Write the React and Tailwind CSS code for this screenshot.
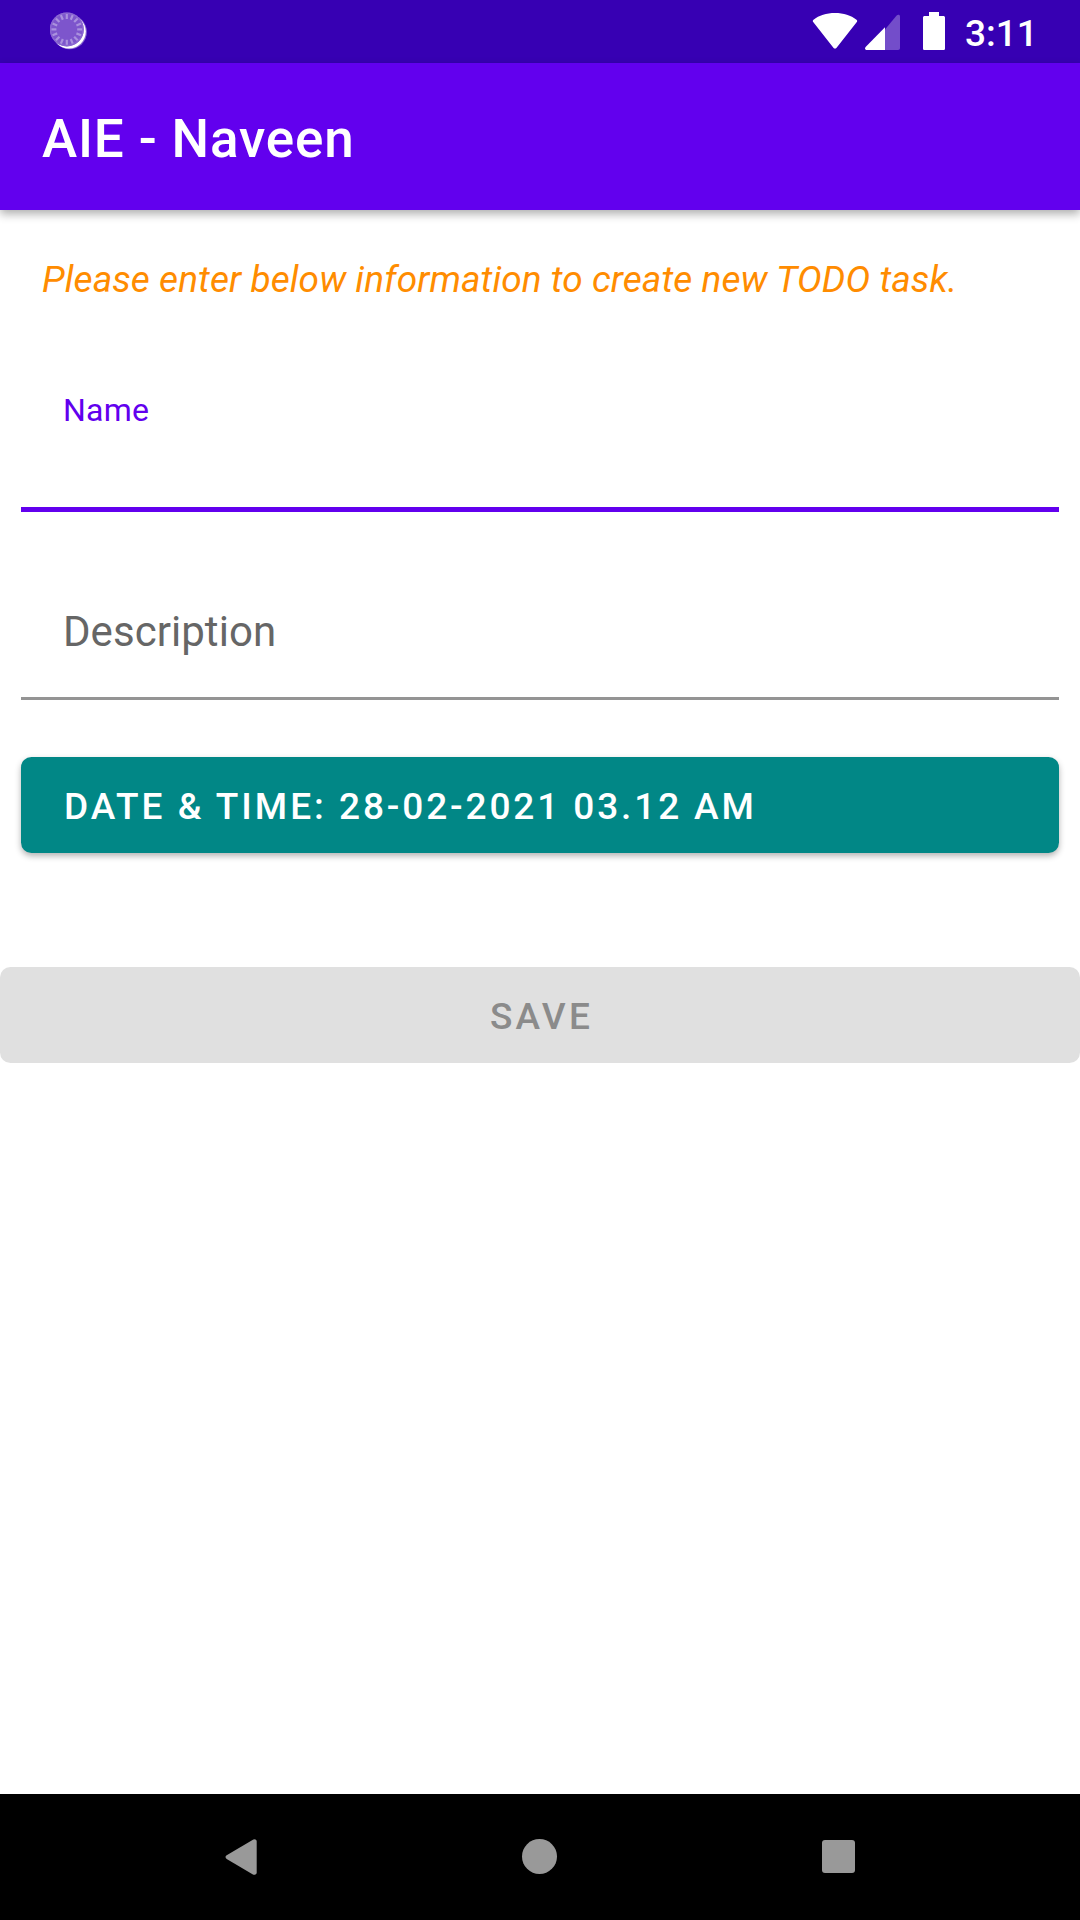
const TICKS = Array.from({ length: 16 }, (_, i) => i * 22.5);

function SyncIcon() {
  return (
    <svg className="h-[38px] w-[38px]" viewBox="0 0 38 38">
      <circle cx="19.6" cy="20" r="17.3" fill="#fff" fillOpacity="0.4" />
      <circle cx="18.9" cy="19.6" r="16.9" fill="#fff" />
      <circle cx="16.8" cy="17.4" r="17" fill="#7d55cc" />
      <circle cx="16.8" cy="17.4" r="16.2" fill="none" stroke="#8a66d1" strokeWidth="1.4" />
      {TICKS.map((a) => (
        <path key={a} d="M16.8 2v5" stroke="#aa91de" strokeWidth="2.2" transform={`rotate(${a} 16.8 17.4)`} />
      ))}
    </svg>
  );
}

function StatusBar() {
  return (
    <header className="flex h-[63px] items-start bg-[#3700b3] text-white">
      <div className="ml-[50px] mt-3">
        <SyncIcon />
      </div>
      <div className="ml-auto mr-[45px] flex items-start">
        <svg className="mt-3 h-[38px] w-[46px]" viewBox="0 0 46 38">
          <path d="M1.5 7.8C7 3.2 14.5 1 23 1s16 2.2 21.500 6.800c.8.7.9 1.500.3 2.300L24.600 35.700c-.9 1.200-2.300 1.200-3.200 0L1.200 10.100c-.6-.8-.5-1.600.3-2.300z" fill="#fff" />
        </svg>
        <svg className="ml-[7px] mt-3 h-[38px] w-[35px]" viewBox="0 0 35 38">
          <path d="M20 17.500 31.400 3.700c1.500-1.400 3.600-1.300 3.600.9V36c0 1.300-.7 2-2 2H20z" fill="#fff" fillOpacity="0.3" />
          <path d="M20 15.300V38H2C0 38-.5 36.300.6 35z" fill="#fff" />
        </svg>
        <svg className="ml-[23px] mt-3 h-[38px] w-[22px]" viewBox="0 0 22 38">
          <path d="M6 0h10v4h4.400c.9 0 1.600.7 1.600 1.600v30.800c0 .9-.7 1.600-1.600 1.600H1.600C.7 38 0 37.300 0 36.400V5.600C0 4.700.7 4 1.600 4H6z" fill="#fff" />
        </svg>
        <span className="ml-5 mt-1 w-[70px] text-[37px] font-medium leading-[60px]">3:11</span>
      </div>
    </header>
  );
}

function NavBar() {
  return (
    <nav className="mt-auto flex h-[126px] items-start bg-black pt-[44px]">
      <svg className="ml-[224px] h-[38px] w-[34px]" viewBox="0 0 34 38">
        <path d="M2.700 17.200 28.500 1.900c1.900-1.100 4.200-.5 4.200 1.700v31c0 2.200-2.300 2.800-4.200 1.700L2.700 21c-1.600-1-1.600-2.800 0-3.800z" fill="#999" />
      </svg>
      <div className="ml-[264px] mt-px size-[35px] rounded-full bg-[#999]" />
      <div className="ml-[264.500px] mt-[2px] size-[33px] rounded-[3px] bg-[#999]" />
    </nav>
  );
}

export default function App() {
  return (
    <div className="flex h-[1920px] w-[1080px] flex-col overflow-hidden bg-white font-['Roboto',sans-serif]">
      <StatusBar />
      <div className="h-[147px] bg-[#6200ee] pl-[42px] pt-[6px] shadow-[0_4px_9px_rgba(0,0,0,0.32)]">
        <h1 className="text-[53px] font-medium leading-[140px] tracking-[0.85px] text-white">AIE - Naveen</h1>
      </div>
      <main>
        <p className="mt-10 pl-[42px] text-[37px] italic leading-[60px] tracking-[0.08px] text-[#ff8c00]">
          Please enter below information to create new TODO task.
        </p>
        <div className="mx-[21px] mt-14 h-[146px] border-b-5 border-[#6200ee] px-[42px] pt-6">
          <label className="block text-[32px] leading-[40px] tracking-[0.2px] text-[#6200ee]">Name</label>
        </div>
        <div className="mx-[21px] mt-[42px] h-[146px] border-b-3 border-[#949494] px-[42px] pt-[48px]">
          <label className="block text-[42px] leading-[60px] tracking-[0.05px] text-[#666]">Description</label>
        </div>
        <button className="mx-[21px] mt-[57px] block h-[96px] w-[1038px] rounded-[10.5px] bg-[#018786] pl-[43px] pt-[4px] text-left text-[37px] font-medium tracking-[3px] text-white shadow-[0_3px_6px_rgba(0,0,0,0.3)]">
          DATE &amp; TIME: <span className="tracking-[2.88px]">28-02-2021 03.12 AM</span>
        </button>
        <button disabled className="mt-[114px] block h-[96px] w-full rounded-[10.5px] bg-[#e0e0e0] pl-[3px] pt-[4px] text-center text-[37px] font-medium tracking-[3.2px] text-[#8b8b8b]">
          SAVE
        </button>
      </main>
      <NavBar />
    </div>
  );
}
